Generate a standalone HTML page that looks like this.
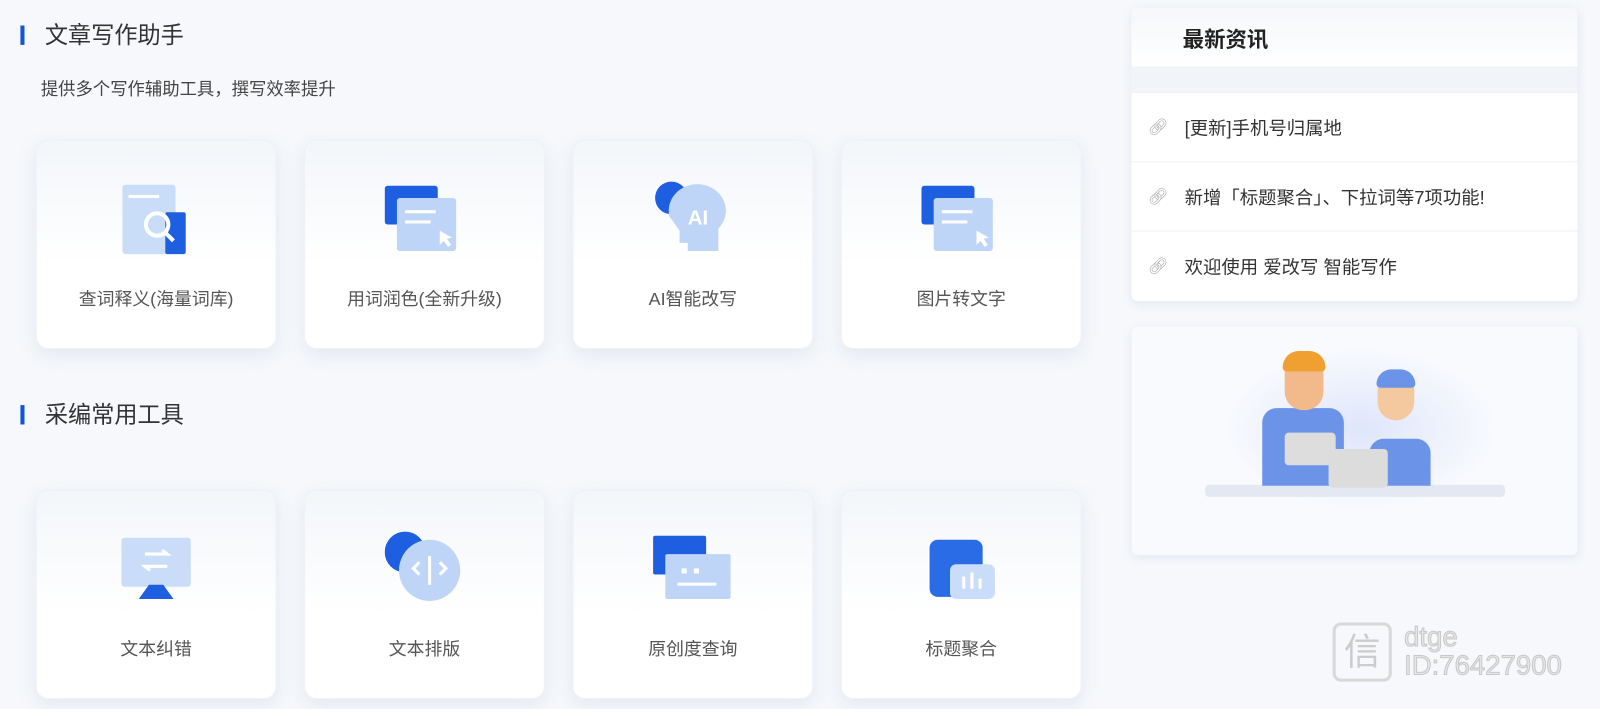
<!DOCTYPE html>
<html><head><meta charset="utf-8"><style>
*{margin:0;padding:0;box-sizing:border-box}
body{width:1600px;height:709px;background:#f6f8fb;font-family:"Liberation Sans","Noto Sans CJK SC",sans-serif;overflow:hidden;color:#333}
#w{position:absolute;left:0;top:0;width:1568px;height:695px;transform:scale(1.0204);transform-origin:0 0}
.h{position:absolute;left:20px;font-size:22.7px;color:#333;padding-left:24px;line-height:28px}
.h:before{content:"";position:absolute;left:0;top:5px;width:4px;height:19px;background:#1456d6}
.sub{position:absolute;left:40px;top:73px;font-size:17px;color:#444}
.card{position:absolute;width:236px;height:205px;border-radius:12px;background:linear-gradient(#f3f6fa,#fff 60%);box-shadow:0 6px 18px rgba(150,170,200,.18);border:1px solid #eef1f6}
.card svg{position:absolute;left:78px;top:38px}
.card span{position:absolute;left:0;right:0;top:142px;text-align:center;font-size:17.5px;color:#555}
.panel{position:absolute;left:1109px;width:437px;background:#fff;border-radius:6px;box-shadow:0 2px 10px rgba(150,170,200,.2)}
.item{height:68px;border-top:1px solid #eef0f3;display:flex;align-items:center;font-size:18px;color:#333}
.item i{width:52px;text-align:center;color:#aaa;font-style:normal;font-size:16px}
</style></head><body><div id="w">
<div class="h" style="top:20px">文章写作助手</div>
<div class="sub">提供多个写作辅助工具，撰写效率提升</div>
<div class="h" style="top:392px">采编常用工具</div>

<div class="card" style="left:35px;top:137px"><svg width="80" height="80"><rect x="6" y="5" width="52" height="68" rx="3" fill="#c9dcf8"/><rect x="48" y="32" width="20" height="41" rx="2" fill="#1d5fe0"/><rect x="12" y="15" width="30" height="3" fill="#fff"/><circle cx="40" cy="44" r="11" fill="none" stroke="#fff" stroke-width="4"/><path d="M48 52l8 8" stroke="#fff" stroke-width="4"/></svg><span>查词释义(海量词库)</span></div>
<div class="card" style="left:298px;top:137px"><svg width="80" height="80"><rect x="0" y="6" width="52" height="38" rx="3" fill="#1d5fe0"/><rect x="12" y="18" width="58" height="52" rx="3" fill="#bfd5f7"/><rect x="20" y="30" width="30" height="3" fill="#fff"/><rect x="20" y="40" width="25" height="3" fill="#fff"/><path d="M54 50l0 14 4-4 4 6 3-2-4-6 5-1z" fill="#fff"/></svg><span>用词润色(全新升级)</span></div>
<div class="card" style="left:561px;top:137px"><svg width="80" height="80"><circle cx="18" cy="18" r="16" fill="#1d5fe0"/><path d="M16 36a28 26 0 1 1 48 12v22h-30v-8h-8v-12z" fill="#bfd5f7"/><text x="34" y="44" font-size="20" font-weight="bold" fill="#fff" font-family="Liberation Sans">AI</text></svg><span>AI智能改写</span></div>
<div class="card" style="left:824px;top:137px"><svg width="80" height="80"><rect x="0" y="6" width="52" height="38" rx="3" fill="#1d5fe0"/><rect x="12" y="18" width="58" height="52" rx="3" fill="#bfd5f7"/><rect x="20" y="30" width="30" height="3" fill="#fff"/><rect x="20" y="40" width="25" height="3" fill="#fff"/><path d="M54 50l0 14 4-4 4 6 3-2-4-6 5-1z" fill="#fff"/></svg><span>图片转文字</span></div>

<div class="card" style="left:35px;top:480px"><svg width="80" height="80"><rect x="5" y="8" width="68" height="48" rx="3" fill="#c9dcf8"/><path d="M28 24h22l-5-4M50 36h-22l5 4" stroke="#fff" stroke-width="3" fill="none"/><path d="M22 68l10-14h14l10 14z" fill="#1d5fe0"/></svg><span>文本纠错</span></div>
<div class="card" style="left:298px;top:480px"><svg width="80" height="80"><circle cx="20" cy="22" r="20" fill="#1d5fe0"/><circle cx="44" cy="40" r="30" fill="#bfd5f7"/><path d="M34 32l-6 6 6 6M54 32l6 6-6 6M44 26v28" stroke="#fff" stroke-width="3" fill="none"/></svg><span>文本排版</span></div>
<div class="card" style="left:561px;top:480px"><svg width="80" height="80"><rect x="0" y="6" width="52" height="38" rx="2" fill="#1d5fe0"/><rect x="12" y="24" width="64" height="44" rx="2" fill="#bfd5f7"/><rect x="28" y="38" width="5" height="5" fill="#fff"/><rect x="40" y="38" width="5" height="5" fill="#fff"/><rect x="24" y="52" width="38" height="3" fill="#fff"/></svg><span>原创度查询</span></div>
<div class="card" style="left:824px;top:480px"><svg width="80" height="80"><rect x="8" y="10" width="52" height="56" rx="8" fill="#2a6be6"/><rect x="28" y="34" width="44" height="34" rx="6" fill="#c9dcf8"/><rect x="40" y="46" width="3" height="12" fill="#fff"/><rect x="48" y="42" width="3" height="16" fill="#fff"/><rect x="56" y="48" width="3" height="10" fill="#fff"/></svg><span>标题聚合</span></div>

<div class="panel" style="top:8px;height:287px;overflow:hidden">
<div style="height:57px;background:linear-gradient(#f5f7fa,#fff);font-size:21px;font-weight:bold;color:#222;padding:15px 0 0 50px">最新资讯</div>
<div style="height:25px;background:#f1f4f9"></div>
<div class="item"><i>🔗︎</i>[更新]手机号归属地</div>
<div class="item"><i>🔗︎</i>新增「标题聚合」、下拉词等7项功能!</div>
<div class="item"><i>🔗︎</i>欢迎使用 爱改写 智能写作</div>
</div>
<div class="panel" style="top:320px;height:224px;background:#f8fafd">
<div style="position:absolute;left:90px;top:20px;width:270px;height:160px;background:radial-gradient(ellipse,#dfe6fb,rgba(248,250,253,0) 70%)"></div>
<div style="position:absolute;left:72px;top:155px;width:294px;height:12px;border-radius:4px;background:#e4e8f3"></div>
<div style="position:absolute;left:128px;top:80px;width:80px;height:76px;border-radius:14px 14px 0 0;background:#6b93e8"></div>
<div style="position:absolute;left:150px;top:26px;width:38px;height:56px;border-radius:18px;background:#f2b98a"></div>
<div style="position:absolute;left:148px;top:24px;width:42px;height:20px;border-radius:16px 16px 4px 4px;background:#f0a030"></div>
<div style="position:absolute;left:233px;top:110px;width:60px;height:46px;border-radius:14px 14px 0 0;background:#6b93e8"></div>
<div style="position:absolute;left:241px;top:44px;width:36px;height:48px;border-radius:18px;background:#f5c9a0"></div>
<div style="position:absolute;left:240px;top:42px;width:38px;height:18px;border-radius:16px 16px 4px 4px;background:#6b93e8"></div>
<div style="position:absolute;left:150px;top:104px;width:50px;height:32px;border-radius:4px;background:#ddd"></div>
<div style="position:absolute;left:193px;top:120px;width:58px;height:38px;border-radius:4px;background:#dcdcdc"></div>
</div>
<div style="position:absolute;left:1306px;top:610px;width:58px;height:58px;border:3px solid #d8d8d8;border-radius:8px;color:#ccc;font-size:36px;text-align:center;line-height:52px">信</div>
<div style="position:absolute;left:1376px;top:610px;font-size:27px;line-height:28px;color:#e6e6e6;-webkit-text-stroke:1px #c8c8c8">dtge<br>ID:76427900</div>
</div></body></html>
